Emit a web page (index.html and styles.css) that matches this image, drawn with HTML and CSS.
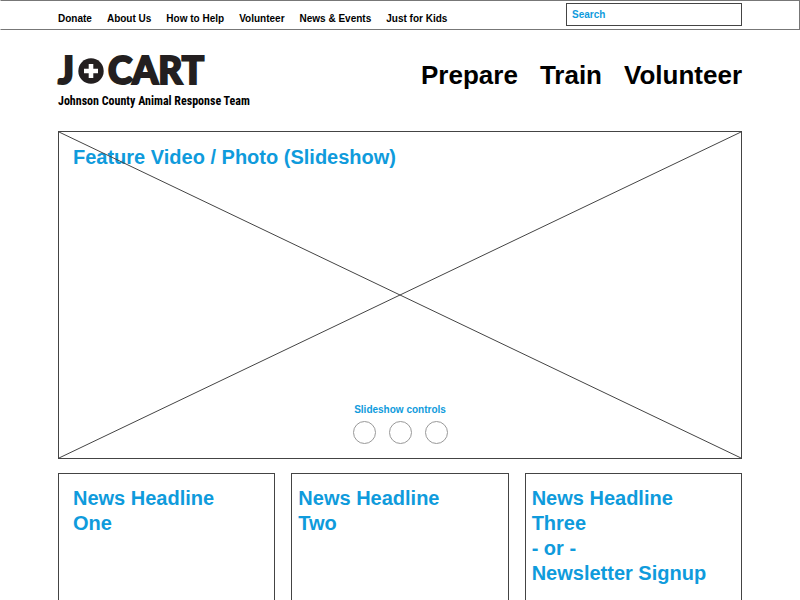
FILE: index.html
```html
<!DOCTYPE html>
<html lang="en">
<head>
<meta charset="utf-8">
<meta name="viewport" content="width=device-width, initial-scale=1">
<title>JoCART - Johnson County Animal Response Team</title>
<link rel="stylesheet" href="styles.css">
</head>
<body>
<div class="topbar">
  <div class="wrap topbar-row">
    <nav class="utility" aria-label="Utility">
      <a href="#">Donate</a>
      <a href="#">About Us</a>
      <a href="#">How to Help</a>
      <a href="#">Volunteer</a>
      <a href="#">News &amp; Events</a>
      <a href="#">Just for Kids</a>
    </nav>
    <form class="search" role="search">
      <input type="search" placeholder="Search" aria-label="Search">
    </form>
  </div>
</div>
<header class="wrap masthead">
  <a class="brand" href="#">
    <span class="logo">
      <span>J</span>
      <svg class="logo-o" viewBox="0 0 26 26" aria-hidden="true">
        <circle cx="13" cy="13" r="12.7" fill="#231f20"/>
        <path d="M10.7 6h4.6v4.7H20v4.6h-4.7V20h-4.6v-4.7H6v-4.6h4.7z" fill="#fff"/>
      </svg>
      <span>CART</span>
    </span>
    <span class="tagline">Johnson County Animal Response Team</span>
  </a>
  <nav class="primary" aria-label="Primary">
    <a href="#">Prepare</a>
    <a href="#">Train</a>
    <a href="#">Volunteer</a>
  </nav>
</header>
<main class="wrap content">
  <section class="feature">
    <h1>Feature Video / Photo (Slideshow)</h1>
    <div class="controls">
      <p>Slideshow controls</p>
      <div class="dots">
        <button type="button" aria-label="Slide 1"></button>
        <button type="button" aria-label="Slide 2"></button>
        <button type="button" aria-label="Slide 3"></button>
      </div>
    </div>
    <svg class="cross" viewBox="0 0 100 100" preserveAspectRatio="none" aria-hidden="true">
      <path d="M0 0L100 100M100 0L0 100"/>
    </svg>
  </section>
  <section class="news">
    <article class="card card-lead"><h2>News Headline<br>One</h2></article>
    <article class="card"><h2>News Headline<br>Two</h2></article>
    <article class="card"><h2>News Headline<br>Three<br>- or -<br>Newsletter Signup</h2></article>
  </section>
</main>
</body>
</html>
```
FILE: styles.css
```css
* { box-sizing: border-box; }

body {
  display: flex;
  flex-direction: column;
  min-height: 100vh;
  margin: 0;
  background: #fff;
  color: #000;
  font-family: "Liberation Sans", Arial, sans-serif;
  font-weight: bold;
}

h1, h2, p { margin: 0; }
a { color: inherit; text-decoration: none; }

.wrap {
  width: 100%;
  max-width: 684px;
  margin: 0 auto;
}

.topbar {
  border: 1px solid #777;
  border-left-color: transparent;
}

.topbar-row {
  display: flex;
  justify-content: space-between;
  padding: 2px 0;
}

.utility {
  display: flex;
  align-items: center;
  gap: 15px;
  padding-top: 8px;
  font-size: 10px;
  line-height: 16px;
}

.search input {
  display: block;
  width: 176px;
  height: 23px;
  padding: 0 5px;
  border: 1px solid #444;
  border-radius: 0;
  background: #fff;
  color: #0f9bdc;
  font: bold 10px "Liberation Sans", Arial, sans-serif;
  appearance: none;
}

.search input::placeholder { color: #0f9bdc; opacity: 1; }

.masthead {
  display: flex;
  justify-content: space-between;
  padding: 19px 0 20px;
}

.brand { display: block; }

.logo {
  display: flex;
  align-items: center;
  gap: 4px;
  height: 42px;
  color: #231f20;
  font: 900 37px/42px Lato, sans-serif;
  -webkit-text-stroke: 2px #231f20;
}

.logo-o { width: 26px; height: 26px; margin-top: 2px; }

.tagline {
  display: block;
  font: bold 12px/20px "Liberation Sans Narrow", "Roboto Condensed", "Arial Narrow", sans-serif;
}

.primary {
  display: flex;
  gap: 22px;
  padding-top: 10px;
  font-size: 26px;
  line-height: 32px;
}

.content {
  display: flex;
  flex: 1;
  flex-direction: column;
  gap: 14px;
}

.feature {
  position: relative;
  display: flex;
  flex-direction: column;
  justify-content: space-between;
  aspect-ratio: 684 / 328;
  padding: 13px 14px 14px;
  border: 1px solid #444;
}

.feature h1, .card h2 {
  color: #0f9bdc;
  font-size: 20px;
  line-height: 25px;
}

.cross {
  position: absolute;
  inset: 0;
  width: 100%;
  height: 100%;
  pointer-events: none;
}

.cross path {
  fill: none;
  stroke: #444;
  stroke-width: 1;
  vector-effect: non-scaling-stroke;
}

.controls {
  display: flex;
  flex-direction: column;
  align-items: center;
  gap: 4px;
  color: #0f9bdc;
  font-size: 10px;
  line-height: 14px;
}

.dots { display: flex; gap: 13px; }

.dots button {
  width: 23px;
  height: 23px;
  padding: 0;
  border: 1px solid #999;
  border-radius: 50%;
  background: #fff;
}

.news {
  display: grid;
  flex: 1;
  grid-template-columns: repeat(3, 1fr);
  gap: 16px;
}

.card {
  padding: 12px 6px 0;
  border: 1px solid #444;
  border-bottom: 0;
}

.card-lead { padding-left: 14px; }
```
